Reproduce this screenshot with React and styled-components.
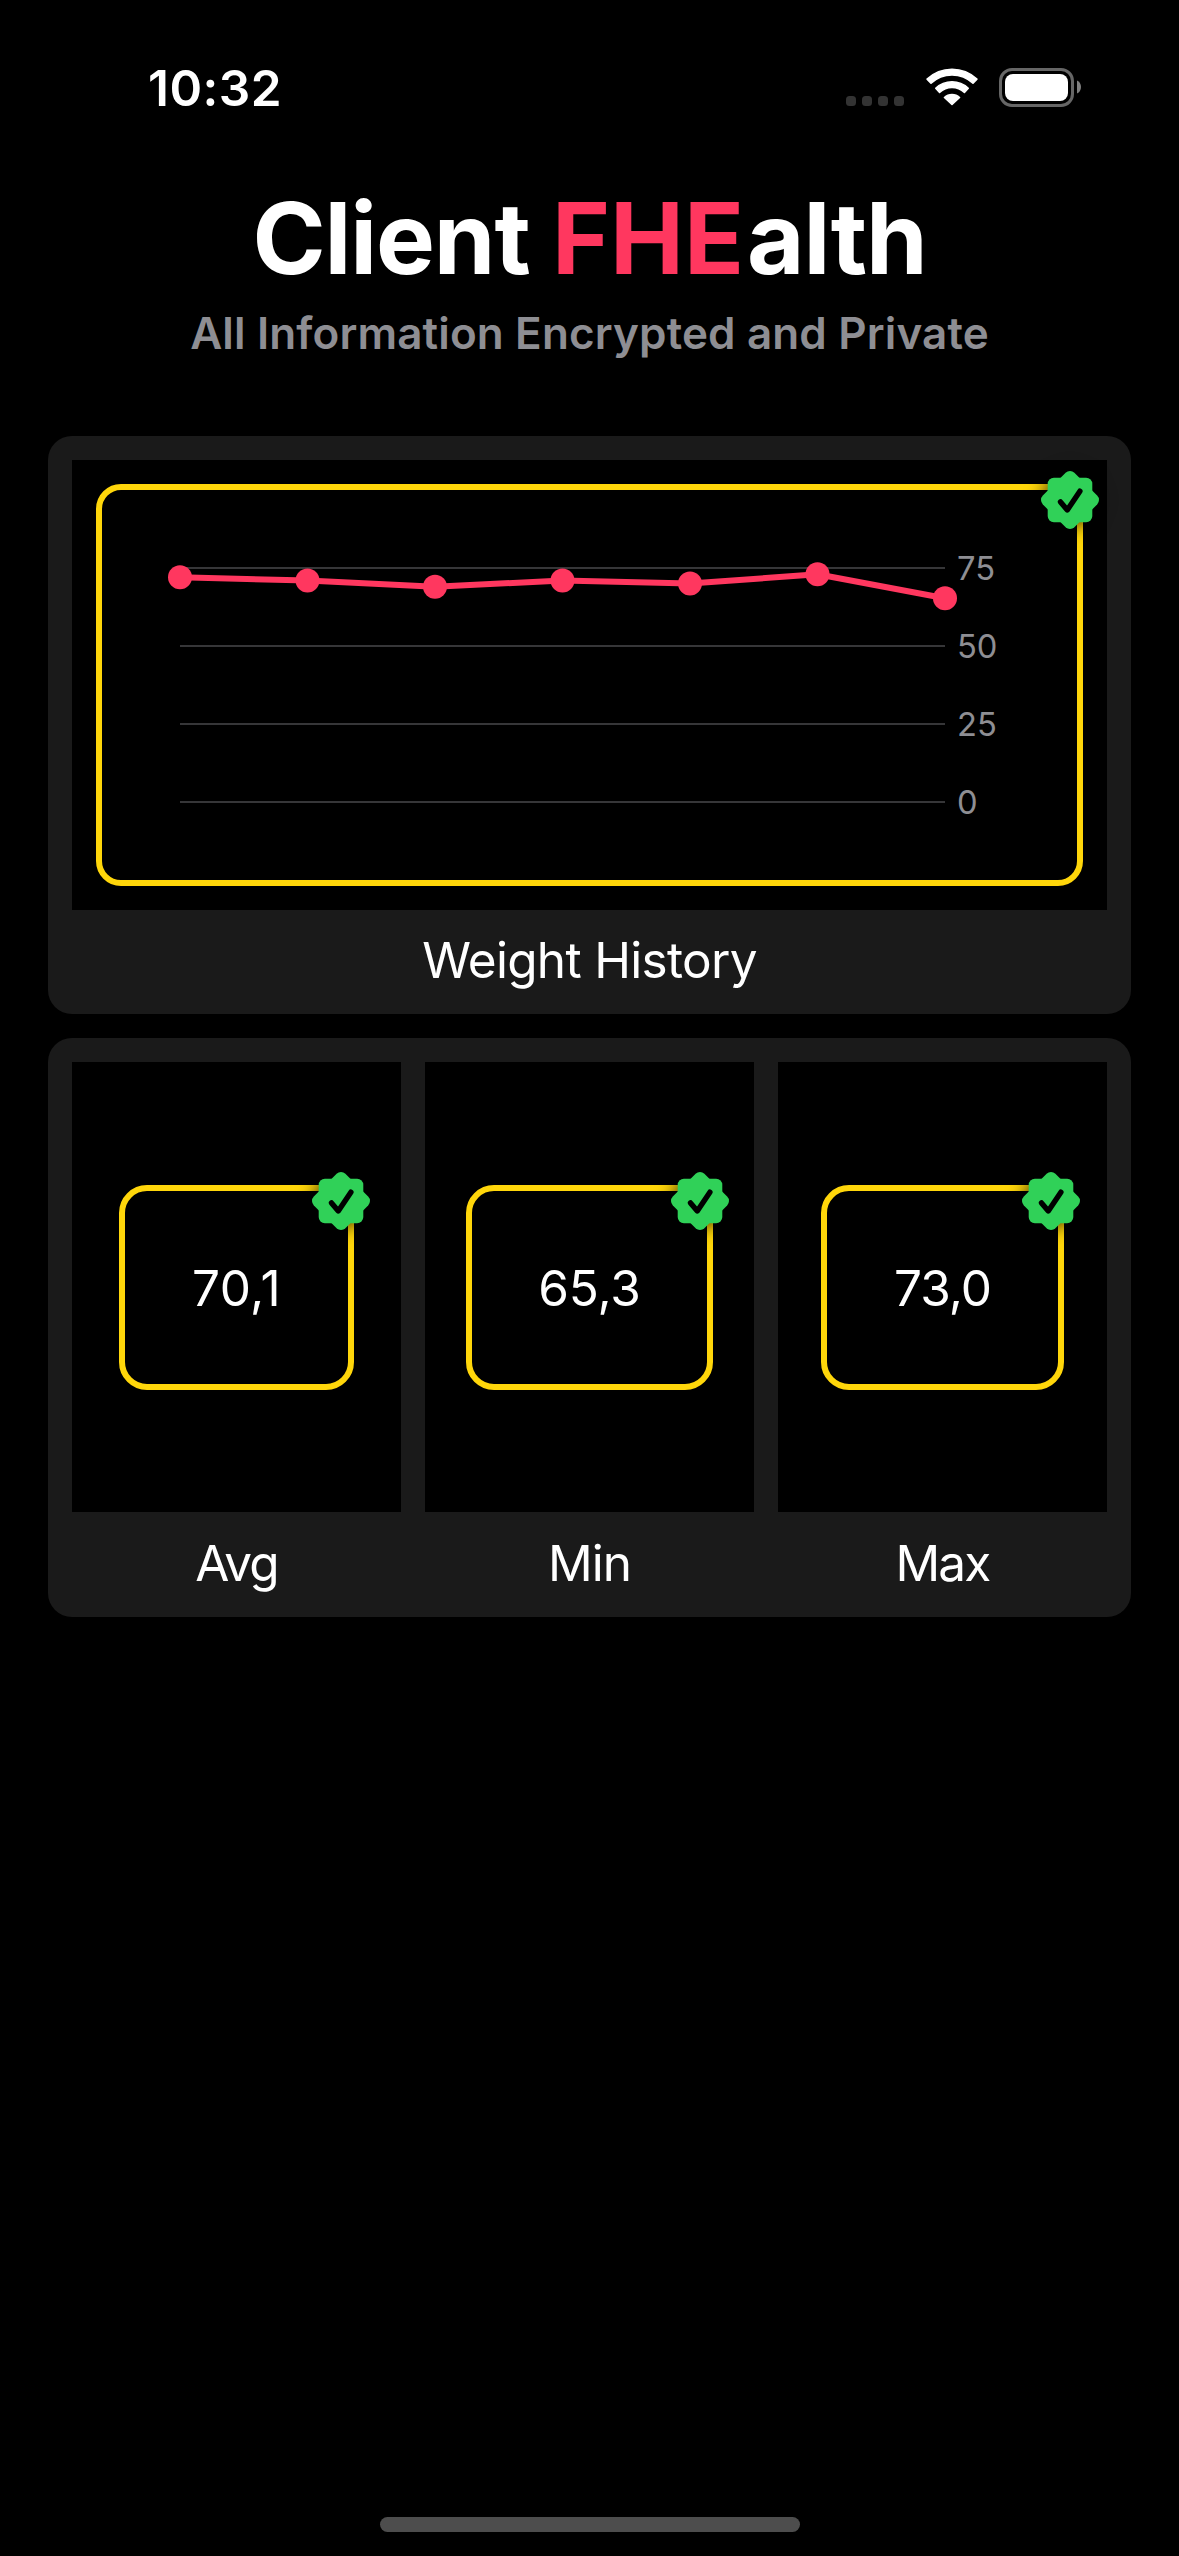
import React from "react";
import styled, { createGlobalStyle } from "styled-components";

const color = {
  background: "#000000",
  card: "#1a1a1a",
  text: "#ffffff",
  secondary: "#8e8e93",
  pink: "#ff375f",
  yellow: "#ffd60a",
  green: "#30d158",
  grid: "#363638",
};

const GlobalStyle = createGlobalStyle`
  *, *::before, *::after { box-sizing: border-box; }
  body {
    margin: 0;
    background: ${color.background};
    color: ${color.text};
    font-family: Inter, Roboto, "Liberation Sans", sans-serif;
    font-kerning: normal;
  }
`;

const Screen = styled.div`
  display: flex;
  flex-direction: column;
  width: 1179px;
  height: 2556px;
  overflow: hidden;
  background: ${color.background};
`;

const StatusBar = styled.header`
  display: flex;
  flex: none;
  align-items: center;
  justify-content: space-between;
  height: 176px;
  padding: 0 97px 0 148px;
`;

const Clock = styled.time`
  font-size: 49.5px;
  font-weight: 600;
  line-height: 60px;
  letter-spacing: 0.5px;
`;

const StatusIcons = styled.div`
  display: flex;
  align-items: flex-end;
  height: 39px;
  margin-bottom: 1px;
`;

const SignalDots = styled.div`
  display: flex;
  gap: 6px;
  margin: 0 22px 1px 0;
`;

const SignalDot = styled.span`
  width: 10px;
  height: 10px;
  border-radius: 3.5px;
  background: #333333;
`;

const WifiGlyph = styled.svg`
  display: block;
  width: 52px;
  height: 38px;
  margin: 0 21px 1px 0;
`;

const BatteryGlyph = styled.svg`
  display: block;
  width: 83px;
  height: 39px;
`;

const Heading = styled.div`
  display: flex;
  flex: none;
  flex-direction: column;
  align-items: center;
  margin-bottom: 70px;
`;

const Title = styled.h1`
  margin: 0;
  font-size: 99px;
  font-weight: 700;
  line-height: 124px;
  letter-spacing: -1.1px;
  white-space: pre;
`;

const Accent = styled.span`
  margin-right: 3px;
  color: ${color.pink};
  letter-spacing: 0;
`;

const Subtitle = styled.p`
  margin: 0;
  color: ${color.secondary};
  font-size: 44px;
  font-weight: 600;
  line-height: 66px;
  letter-spacing: 0.14px;
`;

const Cards = styled.main`
  display: flex;
  flex: 1;
  flex-direction: column;
  gap: 24px;
  padding: 0 48px;
`;

const Card = styled.section`
  display: flex;
  gap: 24px;
  padding: 24px 24px 0;
  border-radius: 24px;
  background: ${color.card};
`;

const Column = styled.figure`
  display: flex;
  flex: 1;
  flex-direction: column;
  min-width: 0;
  margin: 0;
`;

const Tile = styled.div`
  display: flex;
  align-items: ${(p) => (p.$fill ? "stretch" : "center")};
  justify-content: center;
  height: 450px;
  padding: ${(p) => (p.$fill ? "24px" : "1px 0 0")};
  background: ${color.background};
`;

const Caption = styled.figcaption`
  height: ${(p) => p.$height}px;
  font-size: 49.5px;
  line-height: ${(p) => p.$line}px;
  letter-spacing: ${(p) => p.$tracking}px;
  text-align: center;
`;

const Frame = styled.div`
  position: relative;
  display: flex;
  flex: ${(p) => (p.$width ? "none" : "1")};
  width: ${(p) => (p.$width ? `${p.$width}px` : "auto")};
  height: ${(p) => (p.$width ? "205px" : "auto")};
  border: 6px solid ${color.yellow};
  border-radius: ${(p) => (p.$width ? 28 : 25)}px;
`;

const BadgeGlyph = styled.svg`
  position: absolute;
  top: -22.8px;
  right: -25.6px;
  width: 66px;
  height: 66px;
  overflow: visible;
  filter: drop-shadow(0 0 9px rgba(0, 0, 0, 0.75));
`;

const Value = styled.output`
  margin: auto;
  padding-top: 1px;
  font-size: 49.5px;
  line-height: 60px;
  letter-spacing: ${(p) => p.$tracking}px;
`;

const ChartArea = styled.div`
  display: flex;
  padding: 39px 0 39px 66px;
`;

const Plot = styled.svg`
  display: block;
  width: 789px;
  height: 312px;
  overflow: visible;
`;

const Axis = styled.div`
  display: flex;
  flex-direction: column;
  color: ${color.secondary};
  font-size: 32.7px;
  line-height: 78px;
`;

const HomeArea = styled.footer`
  display: flex;
  flex: none;
  justify-content: center;
  height: 39px;
`;

const HomeIndicator = styled.div`
  width: 420px;
  height: 15px;
  border-radius: 8px;
  background: #4d4d4d;
`;

const WIFI_ANGLE = (43.3 * Math.PI) / 180;

function wifiBand(outer, inner) {
  const cx = 26;
  const cy = 37.5;
  const s = Math.sin(WIFI_ANGLE);
  const c = Math.cos(WIFI_ANGLE);
  const at = (r, side) => `${cx + side * r * s} ${cy - r * c}`;
  const back = inner
    ? `L${at(inner, 1)}A${inner} ${inner} 0 0 0 ${at(inner, -1)}`
    : `L${cx} ${cy - 1}`;
  return `M${at(outer, -1)}A${outer} ${outer} 0 0 1 ${at(outer, 1)}${back}Z`;
}

function Wifi() {
  return (
    <WifiGlyph viewBox="0 0 52 38" aria-hidden="true">
      <g fill="#fff" stroke="#fff" strokeWidth="1.6" strokeLinejoin="round">
        <path d={wifiBand(36.3, 30.6)} />
        <path d={wifiBand(23.7, 18.1)} />
        <path d={wifiBand(11, 0)} />
      </g>
    </WifiGlyph>
  );
}

function Battery() {
  return (
    <BatteryGlyph viewBox="0 0 83 39" aria-hidden="true">
      <rect x="1.5" y="1.5" width="72" height="36" rx="11.5" fill="none" stroke="#666" strokeWidth="3" />
      <rect x="6" y="6" width="63" height="27" rx="8" fill="#fff" />
      <path d="M78 12.5c2.5 1 4 3.7 4 6.5s-1.5 5.5-4 6.5z" fill="#808080" />
    </BatteryGlyph>
  );
}

function Badge() {
  return (
    <BadgeGlyph viewBox="-33 -33 66 66" aria-hidden="true">
      <g fill={color.green}>
        <rect x="-22.3" y="-22.3" width="44.6" height="44.6" rx="6.2" />
        <rect x="-22.3" y="-22.3" width="44.6" height="44.6" rx="6.2" transform="rotate(45)" />
      </g>
      <path
        d="M-9.5 1.9L-2.7 10L9.9 -8.8"
        fill="none"
        stroke="#000"
        strokeWidth="5.4"
        strokeLinecap="round"
        strokeLinejoin="round"
      />
    </BadgeGlyph>
  );
}

const weights = [72, 71, 69, 71, 70, 73, 65.3];
const ticks = [75, 50, 25, 0];
const plotX = (i) => 12 + i * 127.5;
const plotY = (value) => 273 - (value * 78) / 25;

function WeightChart() {
  return (
    <ChartArea>
      <Plot viewBox="0 0 789 312" role="img" aria-label="Weight History">
        {ticks.map((t) => (
          <line key={t} x1="12" x2="777" y1={plotY(t)} y2={plotY(t)} stroke={color.grid} strokeWidth="2" />
        ))}
        <polyline
          points={weights.map((w, i) => `${plotX(i)},${plotY(w)}`).join(" ")}
          fill="none"
          stroke={color.pink}
          strokeWidth="6"
          strokeLinejoin="round"
        />
        {weights.map((w, i) => (
          <circle key={i} cx={plotX(i)} cy={plotY(w)} r="12" fill={color.pink} />
        ))}
      </Plot>
      <Axis>
        {ticks.map((t) => (
          <span key={t}>{t}</span>
        ))}
      </Axis>
    </ChartArea>
  );
}

const stats = [
  { label: "Avg", value: "70,1", width: 235, tracking: 0.4, labelTracking: -1.8 },
  { label: "Min", value: "65,3", width: 247, tracking: -0.1, labelTracking: -1 },
  { label: "Max", value: "73,0", width: 243, tracking: -1, labelTracking: -1.8 },
];

export default function App() {
  return (
    <Screen>
      <GlobalStyle />
      <StatusBar>
        <Clock>10:32</Clock>
        <StatusIcons>
          <SignalDots>
            <SignalDot />
            <SignalDot />
            <SignalDot />
            <SignalDot />
          </SignalDots>
          <Wifi />
          <Battery />
        </StatusIcons>
      </StatusBar>

      <Heading>
        <Title>
          Client <Accent>FHE</Accent>alth
        </Title>
        <Subtitle>All Information Encrypted and Private</Subtitle>
      </Heading>

      <Cards>
        <Card>
          <Column>
            <Tile $fill>
              <Frame>
                <WeightChart />
                <Badge />
              </Frame>
            </Tile>
            <Caption $height={104} $line={101} $tracking={-0.7}>Weight History</Caption>
          </Column>
        </Card>
        <Card>
          {stats.map((s) => (
            <Column key={s.label}>
              <Tile>
                <Frame $width={s.width}>
                  <Value $tracking={s.tracking}>{s.value}</Value>
                  <Badge />
                </Frame>
              </Tile>
              <Caption $height={105} $line={103} $tracking={s.labelTracking}>{s.label}</Caption>
            </Column>
          ))}
        </Card>
      </Cards>

      <HomeArea>
        <HomeIndicator />
      </HomeArea>
    </Screen>
  );
}
